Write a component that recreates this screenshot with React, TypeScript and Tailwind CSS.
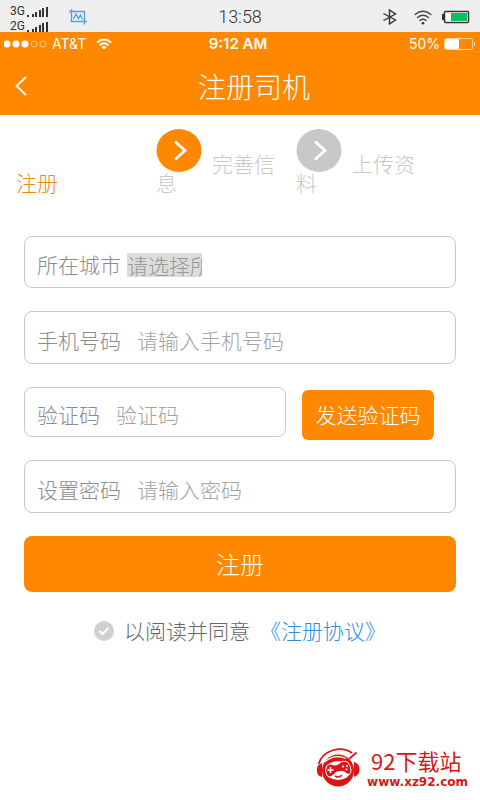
import type { ReactNode } from "react";

function SignalBars() {
  return (
    <svg width="22" height="12" viewBox="0 0 22 12" fill="#333">
      <rect x="0" y="9" width="2" height="2" />
      <rect x="5" y="8" width="2" height="3" />
      <rect x="8" y="6" width="2" height="5" />
      <rect x="12" y="4" width="2" height="7" />
      <rect x="15" y="2" width="2" height="9" />
      <rect x="19" y="1" width="2" height="10" />
    </svg>
  );
}

function ScreenshotIcon() {
  return (
    <svg width="18" height="16" viewBox="0 0 18 16" fill="none" stroke="#4fa3d8" strokeWidth="1.4">
      <path d="M0 2.500h15.500V15.500M2.500 0v12.500H18" />
      <path d="M4.500 10l2.500-5 2.500 4.500 2-3.500 2 4.500" />
    </svg>
  );
}

function BluetoothIcon() {
  return (
    <svg width="16" height="16" viewBox="0 0 16 16" fill="none" stroke="#333" strokeWidth="1.4">
      <path d="M1.500 4.500l12 6.500-6 4V1l6 4L1.500 11.500" />
    </svg>
  );
}

function AndroidWifi() {
  return (
    <svg width="18" height="15" viewBox="0 0 18 15" fill="none" stroke="#444" strokeWidth="1.3" strokeLinecap="round">
      <path d="M1 4.500Q9-2 17 4.500M3.500 7.500q5.500-4.500 11 0M6 10.500q3-2.500 6 0" />
      <circle cx="9" cy="13.300" r="1.300" fill="#333" stroke="none" />
    </svg>
  );
}

function AndroidBattery() {
  return (
    <svg width="28" height="14" viewBox="0 0 28 14">
      <rect x="0" y="4" width="2" height="6" fill="#333" />
      <rect x="2.500" y="1.500" width="24" height="11" rx="1" fill="#fff" stroke="#333" strokeWidth="1.500" />
      <rect x="9" y="3" width="16" height="8" fill="#0bbf63" />
    </svg>
  );
}

function AppWifi() {
  return (
    <svg width="16" height="12" viewBox="0 0 16 12" fill="none" stroke="#fff" strokeWidth="2">
      <path d="M1 4.500q7-6 14 0M3.500 7.300q4.500-4 9 0" />
      <path d="M8 11.500L5.300 9q2.700-2 5.400 0z" fill="#fff" stroke="none" />
    </svg>
  );
}

function AppBattery() {
  return (
    <svg width="32" height="12" viewBox="0 0 32 12">
      <rect x="0.500" y="0.500" width="28" height="11" rx="2" fill="none" stroke="#ffd9a8" />
      <rect x="1" y="1" width="14" height="10" rx="1" fill="#fff" />
      <path d="M30 4q2 2 0 4z" fill="#fff" />
    </svg>
  );
}

function SiteLogo() {
  return (
    <svg width="46" height="40" viewBox="0 0 46 40">
      {/* headphones */}
      <path d="M3.500 16C8 2 26-3 37 5" fill="none" stroke="#dd1414" strokeWidth="1.800" />
      <path d="M7 15q-6 2-5 8 0 5 5 6zM39 14q6 2 5.500 8 0 5-5.500 7z" fill="#dd1414" />
      <path d="M41.500 4.500L34 11" stroke="#dd1414" strokeWidth="1.800" />
      {/* face */}
      <circle cx="23" cy="22.500" r="16" fill="#dd1414" />
      <path d="M9.500 14Q20 5.500 31 10.500" fill="none" stroke="#fff" strokeWidth="1.200" />
      <ellipse cx="23" cy="22.500" rx="12.500" ry="9.500" fill="#fff" />
      {/* gamepad */}
      <path
        d="M12 17.500q3-2.500 6.500-.5 3 .5 5.500-1.500 4.500-4 9-1 3 3.500 3 8.500-1 5-4.500 2.500-3-3-6.500-2-3.500 0-6.500 3-3 4-6 1.500-3.500-5.500-.5-10.500z"
        fill="#dd1414"
        stroke="#fff"
        strokeWidth="1"
      />
      <path d="M15.500 19v6M12.500 22h6" stroke="#fff" strokeWidth="1.600" />
      <circle cx="28" cy="18.500" r="1.100" fill="#fff" />
      <circle cx="32" cy="18" r="1.100" fill="#fff" />
      <circle cx="31.500" cy="21.500" r="1.100" fill="#fff" />
      <path d="M20 28q4 2.500 7-1" fill="none" stroke="#dd1414" strokeWidth="1.500" />
    </svg>
  );
}

function DeviceBar() {
  return (
    <div className="grid h-8 grid-cols-[1fr_auto_1fr] items-center bg-[#efefef] px-2.5 font-['Roboto',sans-serif] text-[#333]">
      <div className="flex items-center gap-5">
        <div className="pt-1 text-xs leading-[15px]">
          <div className="flex items-center gap-0.5">
            3G <SignalBars />
          </div>
          <div className="flex items-center gap-0.5">
            2G <SignalBars />
          </div>
        </div>
        <ScreenshotIcon />
      </div>
      <span className="text-lg font-light">13:58</span>
      <div className="flex items-center justify-end gap-2.5">
        <BluetoothIcon />
        <span className="pl-1.5">
          <AndroidWifi />
        </span>
        <AndroidBattery />
      </div>
    </div>
  );
}

function AppHeader() {
  return (
    <header className="bg-[#ff8800] text-white">
      <div className="grid h-6 grid-cols-[1fr_auto_1fr] items-center px-1 font-['Inter',sans-serif] text-sm">
        <div className="flex items-center gap-2.5">
          <div className="flex items-center gap-1">
            <svg width="44" height="8" viewBox="0 0 44 8" fill="#fff">
              <circle cx="3" cy="4" r="3.500" />
              <circle cx="12" cy="4" r="3.500" />
              <circle cx="21" cy="4" r="3.500" />
              <circle cx="30" cy="4" r="3" fill="none" stroke="#ffc98a" />
              <circle cx="39" cy="4" r="3" fill="none" stroke="#ffc98a" />
            </svg>
            AT&amp;T
          </div>
          <AppWifi />
        </div>
        <span className="pr-1 text-[15px] font-semibold">9:12 AM</span>
        <div className="flex items-center justify-end gap-1">
          50% <AppBattery />
        </div>
      </div>
      <div className="flex h-[59px] items-center pl-3.5">
        <button type="button" aria-label="返回">
          <svg width="14" height="20" viewBox="0 0 14 20" fill="none" stroke="#fff" strokeWidth="1.8">
            <path d="M12 1L2.500 10 12 19" />
          </svg>
        </button>
        <h1 className="flex-1 text-center text-[28px] font-light">注册司机</h1>
      </div>
    </header>
  );
}

function StepArrow({ active }: { active?: boolean }) {
  return (
    <svg width="46" height="43" viewBox="0 0 46 43" className="mr-2.5 inline-block align-baseline">
      <ellipse cx="23" cy="21.500" rx="22.500" ry="21.500" fill={active ? "#ff8800" : "#c8c8c8"} />
      <path d="M19 12.500l10 9-10 9" fill="none" stroke="#fff" strokeWidth="2.800" />
    </svg>
  );
}

function Steps() {
  return (
    <ol className="grid grid-cols-3 items-end pt-3.5 pr-11 pl-4 text-[21px] leading-[19px] font-light text-[#c8c8c8]">
      <li className="text-[#f08a10]">注册</li>
      <li className="pr-2">
        <StepArrow active />
        完善信息
      </li>
      <li className="pr-2">
        <StepArrow />
        上传资料
      </li>
    </ol>
  );
}

function Field({ id, label, children }: { id: string; label: string; children: ReactNode }) {
  return (
    <div className="flex min-w-0 flex-1 items-center rounded-lg border border-[#c8c8c8] px-3 pt-1.5">
      <label htmlFor={id} className="shrink-0 text-[#8c8c8c]">
        {label}
      </label>
      {children}
    </div>
  );
}

const inputClass = "ml-4 min-w-0 flex-1 bg-transparent font-light outline-none placeholder:text-[#a4a4a4]";

export default function App() {
  return (
    <div className="flex min-h-screen flex-col bg-white font-['Noto_Sans_CJK_SC',sans-serif]">
      <DeviceBar />
      <AppHeader />
      <Steps />

      <form className="flex flex-col gap-[23px] px-6 pt-11 text-[21px] font-light">
        <div className="flex h-[52px]">
          <Field id="city" label="所在城市">
            <select
              id="city"
              className="ml-1.5 h-6 w-[75px] appearance-none overflow-hidden bg-[#dcdcdc] leading-6 text-clip text-[#999] outline-none"
            >
              <option>请选择所在城市</option>
            </select>
          </Field>
        </div>
        <div className="flex h-[53px]">
          <Field id="phone" label="手机号码">
            <input id="phone" type="tel" placeholder="请输入手机号码" className={inputClass} />
          </Field>
        </div>
        <div className="flex h-[50px] gap-4 pr-[22px]">
          <Field id="code" label="验证码">
            <input id="code" placeholder="验证码" className={inputClass} />
          </Field>
          <button type="button" className="mt-[3px] h-[50px] w-[132px] shrink-0 rounded-md bg-[#ff8800] text-white">
            发送验证码
          </button>
        </div>
        <div className="flex h-[53px]">
          <Field id="password" label="设置密码">
            <input id="password" type="password" placeholder="请输入密码" className={inputClass} />
          </Field>
        </div>
        <button type="submit" className="h-14 rounded-lg bg-[#ff8800] text-2xl font-light text-white">
          注册
        </button>
        <div className="flex items-center justify-center text-[#666]">
          <label className="flex items-center gap-2.5">
            <span className="relative flex">
              <input type="checkbox" defaultChecked className="size-5 appearance-none rounded-full bg-[#d0d0d0]" />
              <svg viewBox="0 0 20 20" className="pointer-events-none absolute inset-0" fill="none" stroke="#fff" strokeWidth="2">
                <path d="M5.500 10l3 3 6-6" />
              </svg>
            </span>
            以阅读并同意
          </label>
          <a href="#agreement" className="ml-2.5 text-[#2b8fe0]">
            《注册协议》
          </a>
        </div>
      </form>

      <footer className="mt-auto flex items-center justify-end gap-1.5 pr-3 pb-2.5 text-[#dd1414]">
        <SiteLogo />
        <div>
          <div className="pl-1 text-[22px] leading-7">92下载站</div>
          <div className="font-['DejaVu_Sans',sans-serif] text-xs leading-4 font-bold">www.xz92.com</div>
        </div>
      </footer>
    </div>
  );
}
